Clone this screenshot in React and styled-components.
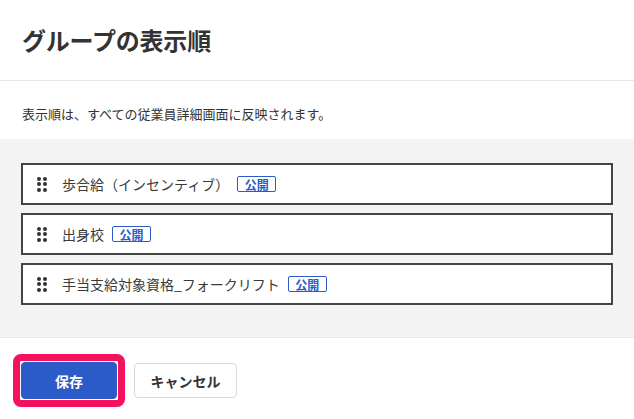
import React from 'react'
import styled, { createGlobalStyle } from 'styled-components'

const GlobalStyle = createGlobalStyle`
  html, body {
    margin: 0;
    padding: 0;
    background: #fff;
  }
  body {
    font-family: 'Noto Sans CJK JP', 'Noto Sans', sans-serif;
    color: #333;
  }
`

const Dialog = styled.div`
  width: 634px;
  height: 419px;
  display: flex;
  flex-direction: column;
  background: #fff;
`

const Header = styled.header`
  height: 81px;
  box-sizing: border-box;
  display: flex;
  align-items: center;
  padding: 0 22px 2px;
  border-bottom: 1px solid #e6e6e6;
`

const Title = styled.h1`
  margin: 0;
  font-size: 24px;
  font-weight: 700;
  color: #333;
  letter-spacing: -0.2px;
`

const Description = styled.p`
  margin: 0;
  height: 58px;
  box-sizing: border-box;
  padding: 24px 22px 0;
  font-size: 13px;
  line-height: 18px;
  color: #333;
`

const ListArea = styled.section`
  flex: 0 0 auto;
  height: 199px;
  box-sizing: border-box;
  background: #f5f4f4;
  padding: 24px 21px 0;
  display: flex;
  flex-direction: column;
  gap: 8px;
  border-bottom: 1px solid #e8e8e8;
`

const Row = styled.div`
  height: 42px;
  box-sizing: border-box;
  border: 2px solid #444;
  background: #fff;
  display: flex;
  align-items: center;
  padding-left: 14px;
`

const Handle = styled.span`
  display: grid;
  grid-template-columns: repeat(2, 4px);
  grid-auto-rows: 4px;
  gap: 1.5px 2px;
  margin-right: 15px;
  i {
    display: block;
    width: 4px;
    height: 4px;
    border-radius: 50%;
    background: #333;
  }
`

const Label = styled.span`
  font-size: 14px;
  color: #3a3a3a;
`

const Badge = styled.span`
  margin-left: 8px;
  width: 39px;
  height: 16px;
  box-sizing: border-box;
  border: 1px solid #2b5bc8;
  border-radius: 2px;
  display: inline-flex;
  align-items: center;
  justify-content: center;
  font-size: 12px;
  font-weight: 700;
  color: #2b5bc8;
`

const Footer = styled.footer`
  display: flex;
  align-items: center;
  padding: 16px 13px 0;
  gap: 9px;
`

const Highlight = styled.span`
  display: inline-flex;
  border: 7px solid #f5125c;
  border-radius: 8px;
  padding: 1px;
  background: #fff;
`

const Button = styled.button`
  height: ${(p) => (p.$primary ? 37 : 35)}px;
  width: ${(p) => (p.$primary ? 96 : 103)}px;
  border-radius: 4px;
  border: 1px solid ${(p) => (p.$primary ? '#2b5bc8' : '#d9d9d9')};
  background: ${(p) => (p.$primary ? '#2b5bc8' : '#fff')};
  color: ${(p) => (p.$primary ? '#fff' : '#333')};
  font-family: inherit;
  font-size: 14px;
  font-weight: 700;
  padding: 0;
  cursor: pointer;
`

const items = ['歩合給（インセンティブ）', '出身校', '手当支給対象資格_フォークリフト']

const App = () => {
  return (
    <Dialog>
      <GlobalStyle />
      <Header>
        <Title>グループの表示順</Title>
      </Header>
      <Description>表示順は、すべての従業員詳細画面に反映されます。</Description>
      <ListArea>
        {items.map((name) => (
          <Row key={name}>
            <Handle>
              <i />
              <i />
              <i />
              <i />
              <i />
              <i />
            </Handle>
            <Label>{name}</Label>
            <Badge>公開</Badge>
          </Row>
        ))}
      </ListArea>
      <Footer>
        <Highlight>
          <Button $primary>保存</Button>
        </Highlight>
        <Button>キャンセル</Button>
      </Footer>
    </Dialog>
  )
}

export default App
